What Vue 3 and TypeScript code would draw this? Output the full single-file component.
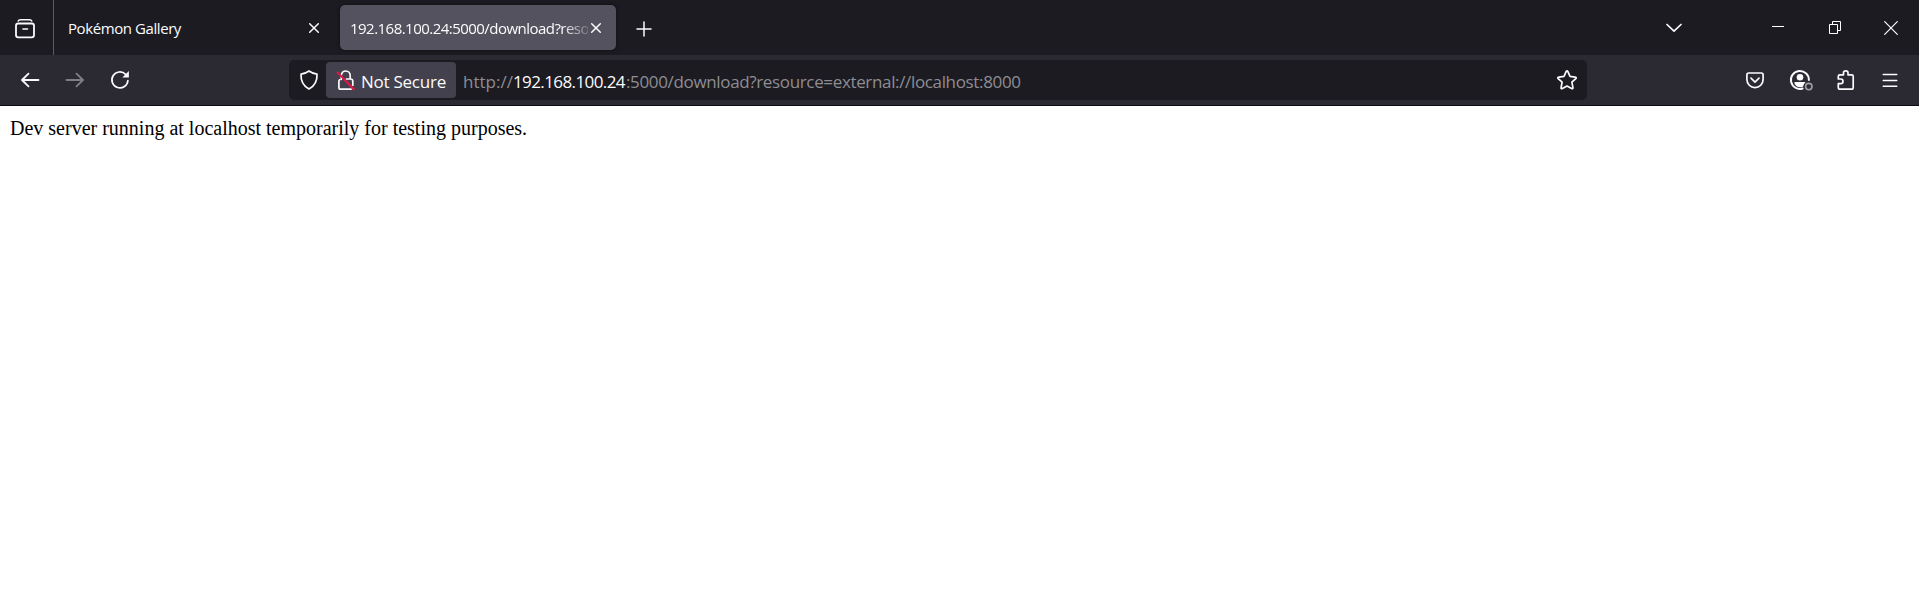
<script setup lang="ts">
interface Tab {
  title: string
  active: boolean
}

const tabs: Tab[] = [
  { title: 'Pokémon Gallery', active: false },
  { title: '192.168.100.24:5000/download?reso', active: true },
]

const url = {
  scheme: 'http://',
  host: '192.168.100.24',
  rest: ':5000/download?resource=external://localhost:8000',
}

const message = 'Dev server running at localhost temporarily for testing purposes.'
</script>

<template>
  <div class="window">
    <header class="tabbar">
      <button class="view" aria-label="Firefox View">
        <svg width="24" height="24" viewBox="0 0 24 24">
          <path d="M5.200 4.100Q5.700 2.700 7.500 2.700h9q1.800 0 2.300 1.400" stroke-width="1.500" />
          <rect x="3" y="6.500" width="18" height="13.800" rx="2.300" stroke-width="1.800" />
          <path d="M10 12h4.500" stroke-width="1.600" />
        </svg>
      </button>
      <div v-for="tab in tabs" :key="tab.title" class="tab" :class="{ active: tab.active }">
        <span class="title">{{ tab.title }}</span>
        <svg class="x" width="12" height="12" viewBox="0 0 12 12">
          <path d="M1.700 1.700l8.600 8.600M10.300 1.700l-8.600 8.600" stroke-width="1.500" />
        </svg>
      </div>
      <svg class="plus" width="16" height="16" viewBox="0 0 16 16">
        <path d="M8 1v14M1 8h14" stroke-width="1.500" />
      </svg>
      <div class="controls">
        <svg class="chevron" width="18" height="12" viewBox="0 0 18 12">
          <path d="M2 2.500l7 6.700 7-6.700" stroke-width="1.700" />
        </svg>
        <svg class="min" width="12" height="14" viewBox="0 0 12 14">
          <path d="M0 5.500h12" stroke="#fff" shape-rendering="crispEdges" />
        </svg>
        <svg class="restore" width="12" height="13" viewBox="0 0 12 13">
          <path d="M.5 3.500h8v9h-8zM3.500 3.500v-3h8v9h-3" stroke="#fff" stroke-linecap="butt" stroke-linejoin="miter" />
        </svg>
        <svg class="close" width="14" height="14" viewBox="0 0 14 14">
          <path d="M.7.7l12.600 12.600M13.300.7L.7 13.300" stroke-width="1.200" />
        </svg>
      </div>
    </header>

    <nav class="toolbar">
      <svg class="back" width="20" height="20" viewBox="0 0 20 20">
        <path d="M8.500 3.700L2 10l6.500 6.300M2.300 10H18.500" stroke-width="1.800" />
      </svg>
      <svg class="forward" width="20" height="20" viewBox="0 0 20 20">
        <path d="M11.500 3.700L18 10l-6.500 6.300M17.700 10H1.500" stroke-width="1.800" />
      </svg>
      <svg class="reload" width="20" height="20" viewBox="0 0 20 20">
        <path d="M17.900 10.500A8 8 0 1 1 15.600 4.300" stroke-width="1.700" />
        <path d="M18.900 1.100v6.500h-6.500z" fill="#fbfbfe" stroke="none" />
      </svg>
      <div class="urlbar">
        <svg class="shield" width="20" height="22" viewBox="0 0 20 22">
          <path d="M10 2q4 2.800 8 3.200c.3 6.400-1.600 11.300-8 14.800C3.600 16.500 1.700 11.600 2 5.200Q6 4.800 10 2z" stroke-width="1.700" />
        </svg>
        <div class="identity">
          <svg class="lock" width="20" height="22" viewBox="0 0 20 22">
            <path d="M5.400 5.800C5.800 3.300 7.400 2 9.700 2c2.800 0 4.500 1.800 4.500 4.700V10M5.300 8v2.300M10.500 10h4c1.500 0 2.300.7 2.300 2.200v4M3.700 10.800q-.8.500-.8 1.500v6.200q0 1.700 1.700 1.700h10.500" stroke-width="1.700" />
            <path d="M1.500 3.500l16.500 17" stroke="#ed1248" stroke-width="1.800" />
          </svg>
          <span class="insecure">Not Secure</span>
        </div>
        <div class="url">
          <span class="scheme">{{ url.scheme }}</span><span class="host">{{ url.host }}</span><span class="rest">{{ url.rest }}</span>
        </div>
        <svg class="star" width="22" height="22" viewBox="0 0 22 22">
          <path d="M10.100 2.700q.9-1.700 1.800 0l2.100 4.700 5.200.7q1.700.3.600 1.500l-3.900 3.600 1 5.300q.2 1.700-1.300 1L11 17l-4.600 2.500q-1.500.7-1.300-1l1-5.300-3.900-3.600q-1.100-1.200.6-1.500l5.200-.7z" stroke-width="1.700" />
        </svg>
      </div>
      <div class="actions">
        <svg class="pocket" width="20" height="20" viewBox="0 0 20 20">
          <path d="M3.700 3h12.600q1.800 0 1.800 1.800V9.500a8.100 8.100 0 0 1-16.200 0V4.800Q1.900 3 3.700 3z" stroke-width="1.700" />
          <path d="M6 8.200l4 3.900 4-3.900" stroke-width="1.700" />
        </svg>
        <svg class="account" width="24" height="22" viewBox="0 0 24 22">
          <path d="M19.900 11A9 9 0 1 0 13.700 19.500" stroke-width="1.900" />
          <circle cx="11" cy="8.200" r="3.300" fill="#fbfbfe" stroke="none" />
          <path d="M5.500 13h11l-1.700 2.500-.8 2.300q-5.800 1.800-8.500-3.100z" fill="#fbfbfe" stroke="none" />
          <circle cx="19.800" cy="17.600" r="3.200" stroke="#9d9da2" stroke-width="1.600" />
        </svg>
        <svg class="extension" width="20" height="22" viewBox="0 0 20 22">
          <path d="M2.300 10V7.300q0-1.500 1.500-1.500h3.700V3.700c0-2.400 4.500-2.400 4.500 0v2.100h3.700q1.500 0 1.500 1.500v11.200q0 1.700-1.700 1.700H4q-1.700 0-1.700-1.700v-3.800h2.500c2.900 0 2.900-4.700 0-4.700z" stroke-width="1.700" />
        </svg>
        <svg class="menu" width="16" height="16" viewBox="0 0 16 16">
          <path d="M1.200 2.500h13.600M1.200 8.500h13.600M1.200 14.200h13.600" stroke-width="1.400" />
        </svg>
      </div>
    </nav>

    <main class="content">{{ message }}</main>
  </div>
</template>

<style>
body { margin: 0; background: #fff; }
</style>

<style scoped>
.window {
  width: 1919px;
  height: 599px;
  overflow: hidden;
  background: #fff;
  color: #fbfbfe;
  font-family: "Open Sans", "Noto Sans", sans-serif;
}
svg {
  display: block;
  flex: none;
  fill: none;
  stroke: #fbfbfe;
  stroke-linecap: round;
  stroke-linejoin: round;
}
.tabbar {
  display: flex;
  align-items: center;
  height: 55px;
  background: #1c1b22;
}
.view {
  box-sizing: border-box;
  width: 54px;
  height: 55px;
  padding: 2px 0 0 13px;
  border: 0;
  border-right: 1px solid #5b5a61;
  background: none;
}
.tab {
  box-sizing: border-box;
  display: flex;
  align-items: center;
  width: 276px;
  height: 45px;
  padding-left: 10px;
  border-radius: 5px;
  font-size: 15px;
  white-space: nowrap;
}
.tab:not(.active) { margin: 0 5px; padding-left: 9px; }
.tab.active { background: #54525e; box-shadow: 0 0 4px #0008; }
.title {
  flex: none;
  width: 238px;
  line-height: 24px;
  letter-spacing: -0.42px;
}
.tab.active .title {
  letter-spacing: -0.53px;
  -webkit-mask-image: linear-gradient(to right, #000 212px, transparent 244px);
  mask-image: linear-gradient(to right, #000 212px, transparent 244px);
}
.x { margin: 0 0 0 2px; }
.plus { margin: 2px 0 0 20px; }
.controls { display: flex; align-items: center; margin-left: auto; padding-right: 21px; }
.min { margin-left: 89px; }
.restore { margin-left: 45px; }
.close { margin-left: 43px; }
.toolbar {
  box-sizing: border-box;
  display: flex;
  align-items: center;
  height: 51px;
  background: #2b2a33;
  border-bottom: 1px solid #0c0c0d;
}
.back { margin-left: 20px; }
.forward { margin-left: 25px; opacity: .4; }
.reload { margin-left: 25px; }
.urlbar {
  display: flex;
  align-items: center;
  width: 1298px;
  height: 40px;
  margin-left: 159px;
  border-radius: 5px;
  background: #1c1b22;
  font-size: 17px;
}
.shield { margin-left: 10px; }
.identity {
  display: flex;
  align-items: center;
  width: 130px;
  height: 36px;
  margin-left: 7px;
  border-radius: 4px;
  background: #42414d;
}
.lock { margin-left: 10px; }
.insecure { margin: 3px 0 0 5px; white-space: nowrap; letter-spacing: -0.25px; }
.url { display: flex; margin: 3px 0 0 7px; white-space: nowrap; color: #8e8d92; }
.scheme { width: 50px; }
.host { width: 113px; color: #fbfbfe; letter-spacing: -0.6px; }
.rest { letter-spacing: -0.35px; }
.star { margin-left: auto; margin-right: 9px; }
.actions { display: flex; align-items: center; margin-left: auto; padding-right: 21px; }
.account { margin-left: 24px; }
.extension { margin-left: 23px; }
.menu { margin-left: 26px; }
.content {
  padding: 11px 10px;
  color: #000;
  font: 20px/23px "Liberation Serif", serif;
}
</style>
